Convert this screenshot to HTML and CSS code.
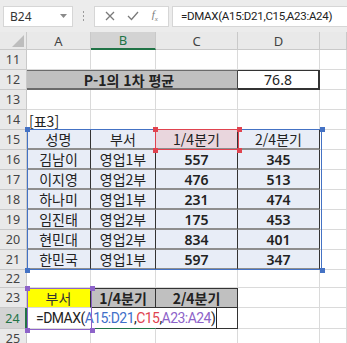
FILE: index.html
```html
<!DOCTYPE html>
<html lang="ko">
<head>
    <meta charset="UTF-8">
    <title>DMAX</title>
    <link rel="stylesheet" href="styles.css">
</head>
<body>
    <div class="app">
        <div class="bar">
            <div class="namebox">
                <span>B24</span>
                <svg width="7" height="4" viewBox="0 0 7 4"><path d="M0 0h7L3.5 4z" fill="#8a8a8a"/></svg>
            </div>
            <div class="grip"><i></i><i></i><i></i></div>
            <div class="tools">
                <svg width="10" height="10" viewBox="0 0 10 10"><path d="M1 1l8 8M9 1l-8 8" stroke="#7a7a7a" stroke-width="1.3"/></svg>
                <svg width="12" height="10" viewBox="0 0 12 10"><path d="M1 5l3.5 3.5L11 1" stroke="#7a7a7a" stroke-width="1.3" fill="none"/></svg>
                <span class="fx">f<sub>x</sub></span>
            </div>
            <div class="input">=DMAX(A15:D21,C15,A23:A24)</div>
        </div>

        <div class="sheet">
            <div class="h corner"><svg width="12" height="12" viewBox="0 0 12 12"><path d="M12 0v12H0z" fill="#bdbdbd"/></svg></div>
            <div class="h">A</div>
            <div class="h hsel">B</div>
            <div class="h">C</div>
            <div class="h">D</div>
            <div class="h"></div>

            <div class="h r">11</div>
            <div class="c"></div><div class="c"></div><div class="c"></div><div class="c"></div><div class="c"></div>

            <div class="h r">12</div>
            <div class="c title">P-1의 1차 평균</div>
            <div class="c result">76.8</div>
            <div class="c"></div>

            <div class="h r">13</div>
            <div class="c"></div><div class="c"></div><div class="c"></div><div class="c"></div><div class="c"></div>

            <div class="h r">14</div>
            <div class="c left">[표3]</div><div class="c"></div><div class="c"></div><div class="c"></div><div class="c"></div>

            <div class="h r">15</div>
            <div class="c t">성명</div>
            <div class="c t">부서</div>
            <div class="c t pink">1/4분기</div>
            <div class="c t">2/4분기</div>
            <div class="c"></div>

            <div class="h r">16</div>
            <div class="c t">김남이</div><div class="c t">영업1부</div><div class="c t num">557</div><div class="c t num">345</div><div class="c"></div>

            <div class="h r">17</div>
            <div class="c t">이지영</div><div class="c t">영업2부</div><div class="c t num">476</div><div class="c t num">513</div><div class="c"></div>

            <div class="h r">18</div>
            <div class="c t">하나미</div><div class="c t">영업1부</div><div class="c t num">231</div><div class="c t num">474</div><div class="c"></div>

            <div class="h r">19</div>
            <div class="c t">임진태</div><div class="c t">영업2부</div><div class="c t num">175</div><div class="c t num">453</div><div class="c"></div>

            <div class="h r">20</div>
            <div class="c t">현민대</div><div class="c t">영업2부</div><div class="c t num">834</div><div class="c t num">401</div><div class="c"></div>

            <div class="h r">21</div>
            <div class="c t">한민국</div><div class="c t">영업1부</div><div class="c t num">597</div><div class="c t num">347</div><div class="c"></div>

            <div class="h r">22</div>
            <div class="c"></div><div class="c"></div><div class="c"></div><div class="c"></div><div class="c"></div>

            <div class="h r">23</div>
            <div class="c yellow">부서</div>
            <div class="c crit">1/4분기</div>
            <div class="c crit">2/4분기</div>
            <div class="c"></div><div class="c"></div>

            <div class="h r rsel">24</div>
            <div class="c edit-cell"><span class="edit">=DMAX(<b class="ref-b">A15:D21</b>,<b class="ref-r">C15</b>,<b class="ref-p">A23:A24</b>)</span></div>
            <div class="c b24"></div>
            <div class="c c24"></div>
            <div class="c"></div><div class="c"></div>

            <div class="h r">25</div>
            <div class="c"></div><div class="c"></div><div class="c"></div><div class="c"></div><div class="c"></div>

            <!-- formula range highlights -->
            <div class="range blue"><i class="k tl"></i><i class="k tr"></i><i class="k bl"></i><i class="k br"></i></div>
            <div class="range red"><i class="k tl"></i><i class="k tr"></i><i class="k bl"></i><i class="k br"></i></div>
            <div class="range purple"><i class="k tl"></i><i class="k tr"></i><i class="k bl"></i><i class="k br"></i></div>
        </div>
    </div>
</body>
</html>
```

FILE: styles.css
```css
* {
    box-sizing: border-box;
}

body {
    margin: 0;
    background: #fff;
}

.app {
    width: 347px;
    height: 343px;
    overflow: hidden;
    font-family: "Noto Sans CJK KR", "Noto Sans", sans-serif;
}

.bar {
    height: 32px;
    background: #ececec;
    display: flex;
    align-items: center;
    padding-left: 3px;
}

.namebox {
    width: 70px;
    height: 21px;
    background: #fff;
    border: 1px solid #d6d6d6;
    display: flex;
    align-items: center;
    justify-content: space-between;
    padding: 0 5px 0 6px;
    font-family: "Noto Sans", sans-serif;
    font-size: 12px;
    color: #333;
}

.grip {
    width: 21px;
    display: flex;
    flex-direction: column;
    align-items: center;
    gap: 2px;
}

.grip i {
    width: 1px;
    height: 2px;
    background: #9a9a9a;
}

.tools {
    width: 75px;
    height: 21px;
    background: #fff;
    border: 1px solid #d6d6d6;
    display: flex;
    align-items: center;
    justify-content: space-around;
    padding: 0 4px;
}

.fx {
    font-family: "Liberation Serif", serif;
    font-style: italic;
    font-size: 11px;
    color: #7a7a7a;
}

.fx sub {
    font-size: 7px;
}

.input {
    flex: 1;
    height: 21px;
    margin-left: 3px;
    background: #fff;
    border: 1px solid #d6d6d6;
    border-right: none;
    display: flex;
    align-items: center;
    padding-left: 8px;
    font-family: Roboto, sans-serif;
    font-size: 11.5px;
    letter-spacing: -0.3px;
    color: #222;
    white-space: nowrap;
}

.sheet {
    position: relative;
    display: grid;
    grid-template-columns: 27px 64px 65px 82px 82px 1fr;
    grid-template-rows: 18px repeat(11, 20px) 18px 20px 21px 20px;
}

.h {
    background: #e9e9e9;
    border-right: 1px solid #c9c9c9;
    border-bottom: 1px solid #c9c9c9;
    display: flex;
    align-items: center;
    justify-content: center;
    font-family: "Noto Sans", sans-serif;
    font-size: 13px;
    color: #444;
}

.h.r {
    font-size: 12.5px;
}

.corner {
    justify-content: flex-end;
    align-items: flex-end;
    padding: 0 2px 2px 0;
}

.hsel {
    background: #d3d3d3;
    border-bottom: 2px solid #217346;
    color: #217346;
}

.rsel {
    background: #d3d3d3;
    border-right: 2px solid #217346;
    color: #217346;
}

.c {
    border-right: 1px solid #dadada;
    border-bottom: 1px solid #dadada;
    display: flex;
    align-items: center;
    justify-content: center;
    font-size: 14px;
    color: #222;
    white-space: nowrap;
    background: #fff;
}

.left {
    justify-content: flex-start;
    padding-left: 2px;
    padding-top: 3px;
}

.title {
    grid-column: span 3;
    background: #c0c0c0;
    border-top: 1px solid #6b6b6b;
    border-bottom: 2px solid #6b6b6b;
    border-right: 1px solid #444;
    font-weight: bold;
    padding-right: 6px;
}

.result {
    border-top: 1px solid #333;
    border-right: 2px solid #333;
    border-bottom: 2px solid #333;
    font-family: "Noto Sans", sans-serif;
}

.t {
    background: #e8edf7;
    border-right: 1px solid #333;
    border-bottom: 2px solid #8e8e8e;
}

.pink {
    background: #e9d6dd;
}

.num {
    font-family: "Noto Sans", sans-serif;
    font-weight: 600;
}

.yellow {
    background: #ffff00;
    border-right: 1px solid #333;
    color: #333;
}

.crit {
    background: #c0c0c0;
    border-top: 1px solid #333;
    border-right: 1px solid #333;
    border-bottom: 1px solid #333;
    font-weight: bold;
}

.b24 {
    border-bottom: 2px solid #217346;
}

.c24 {
    border-right: 1px solid #333;
    border-bottom: 1px solid #333;
}

.edit-cell {
    justify-content: flex-start;
    overflow: visible;
}

.edit {
    position: relative;
    z-index: 2;
    height: 20px;
    display: flex;
    align-items: center;
    padding-left: 9px;
    padding-right: 1px;
    background: #fff;
    border-right: 1px solid #222;
    font-family: Roboto, sans-serif;
    font-size: 14px;
    letter-spacing: -0.55px;
    color: #222;
}

.edit b {
    font-weight: normal;
}

.ref-b {
    color: #3f6fc9;
}

.ref-r {
    color: #e0434f;
}

.ref-p {
    color: #8d63c9;
}

.range {
    position: absolute;
    z-index: 3;
    border: 1.5px solid;
}

.range .k {
    position: absolute;
    width: 5px;
    height: 5px;
}

.range.blue {
    left: 27px;
    top: 97px;
    width: 295px;
    height: 141px;
    border-color: #4472c4;
}

.range.red {
    left: 155px;
    top: 97px;
    width: 84px;
    height: 21px;
    border-color: #e0434f;
}

.range.purple {
    left: 27px;
    top: 256px;
    width: 65px;
    height: 42px;
    border-color: #8d63c9;
}

.blue .k { background: #4472c4; }
.red .k { background: #e0434f; }
.purple .k { background: #8d63c9; }

.k.tl { left: -3.5px; top: -3.5px; }
.k.tr { right: -3.5px; top: -3.5px; }
.k.bl { left: -3.5px; bottom: -3.5px; }
.k.br { right: -3.5px; bottom: -3.5px; }
```
